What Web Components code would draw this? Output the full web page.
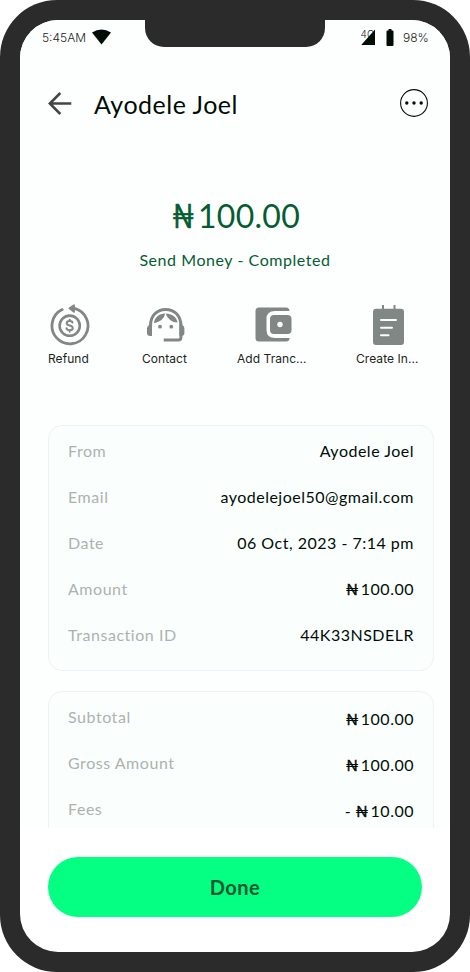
<!DOCTYPE html>
<html lang="en">
<head>
<meta charset="utf-8">
<title>Transaction</title>
<style>
body{margin:0;background:#fff;font-family:Lato,"Liberation Sans",sans-serif;color:#000d06}
</style>
</head>
<body>
<phone-frame>
  <status-bar slot="status"></status-bar>
  <title-bar slot="title">Ayodele Joel</title-bar>
  <amount-summary><naira-amount big>100.00</naira-amount><span slot="note">Send Money - Completed</span></amount-summary>
  <action-row>
    <action-item icon="refund" style="width:41px;margin-left:28px">Refund</action-item>
    <action-item icon="contact" style="width:46px;margin-left:53px">Contact</action-item>
    <action-item icon="wallet" style="width:70px;margin-left:49px">Add Tranc...</action-item>
    <action-item icon="note" style="width:63px;margin-left:49px">Create In...</action-item>
  </action-row>
  <detail-card>
    <detail-row label="From">Ayodele Joel</detail-row>
    <detail-row label="Email">ayodelejoel50@gmail.com</detail-row>
    <detail-row label="Date">06 Oct, 2023 - 7:14 pm</detail-row>
    <detail-row label="Amount"><naira-amount>100.00</naira-amount></detail-row>
    <detail-row label="Transaction ID">44K33NSDELR</detail-row>
  </detail-card>
  <detail-card class="second">
    <detail-row label="Subtotal" low><naira-amount>100.00</naira-amount></detail-row>
    <detail-row label="Gross Amount" low><naira-amount>100.00</naira-amount></detail-row>
    <detail-row label="Fees" low><naira-amount prefix="-">10.00</naira-amount></detail-row>
  </detail-card>
  <done-button slot="footer">Done</done-button>
</phone-frame>
<script>
const define = (name, render) => customElements.define(name, class extends HTMLElement {
  constructor() { super(); this.attachShadow({mode: 'open'}); }
  connectedCallback() {
    const t = document.createElement('template');
    t.innerHTML = render(this);
    this.shadowRoot.replaceChildren(t.content.cloneNode(true));
  }
});

define('phone-frame', () => `<style>
:host{display:block;box-sizing:border-box;width:470px;height:972px;padding:20px;background:#2b2b2b;border-radius:57px}
.screen{position:relative;display:flex;flex-direction:column;height:932px;border-radius:38px;background:#fff;overflow:hidden}
.scroll{height:808px;overflow:hidden;background:#fdfffe;display:flex;flex-direction:column;flex:none}
.notch{position:absolute;left:125px;top:0;width:180px;height:27px;background:#2b2b2b;border-radius:0 0 19px 19px}
footer{flex:1;padding:29px 28px 35px}
</style><div class="screen"><div class="scroll"><slot name="status"></slot><slot name="title"></slot><slot></slot></div><footer><slot name="footer"></slot></footer><div class="notch"></div></div>`);

define('status-bar', () => `<style>
:host{display:flex;height:36px;padding:0 23px 2px 22px;align-items:center;font:300 12px/14px Inter,sans-serif;color:#1c2420;flex:none;box-sizing:border-box}
.time{width:44px;margin-right:5.500px;white-space:nowrap;padding-top:1px}
.spacer{flex:1}
svg{display:block;flex:none}
.pct{width:24px;white-space:nowrap;padding-top:1px}
</style><span class="time">5:45AM</span>
<svg width="19" height="16" viewBox="0 0 19 16"><path d="M0 3.600Q9.500-2.500 19 3.600L9.500 15.500Z" fill="#000d06"/></svg>
<span class="spacer"></span>
<svg width="15" height="18" viewBox="0 0 15 18"><text x="-.4" y="9.500" font-family="Inter" font-size="10" font-weight="300" fill="#1c2420">4G</text><path d="M14 1.500V17H.2Z" fill="#000d06"/></svg>
<svg width="8" height="17" viewBox="0 0 8 17" style="margin:0 9px 0 10px"><path d="M2.500 0h3v1.500H6.500Q7.500 1.500 7.500 2.500V16Q7.500 17 6.500 17h-5Q.5 17 .5 16V2.500Q.5 1.500 1.500 1.500h1Z" fill="#000d06"/></svg>
<span class="pct">98%</span>`);

define('title-bar', () => `<style>
:host{display:flex;align-items:center;height:64px;margin-top:15px;padding:0 22px 0 28px;flex:none;font-size:25px;line-height:32px;box-sizing:border-box;letter-spacing:.5px}
.t{flex:1;margin-left:22px;padding-top:1px}
svg{display:block}
</style><svg width="24" height="24" viewBox="0 0 24 24" fill="none" stroke="#414644" stroke-width="2.500"><path d="M23.300 12.500H2M12.300 2 1.800 12.500 12.300 23"/></svg>
<div class="t"><slot></slot></div>
<svg width="28" height="28" viewBox="0 0 28 28"><circle cx="14" cy="14" r="13.400" fill="none" stroke="#000d06" stroke-width="1.100"/><g fill="#000d06"><circle cx="6.800" cy="14" r="1.700"/><circle cx="14" cy="14" r="1.700"/><circle cx="21.200" cy="14" r="1.700"/></g></svg>`);

define('naira-amount', el => `<style>
:host{display:inline-flex;align-items:baseline;font-size:16px;letter-spacing:.5px;font-weight:400}
:host([big]){font-size:32px;letter-spacing:.3px}
.p{margin-right:4.500px}
.n{width:13px;margin-right:2px;letter-spacing:0;-webkit-text-stroke:.35px currentColor}
.n span{display:inline-block}
:host([big]) .n{width:22px;margin-right:4px;-webkit-text-stroke:.5px currentColor}
:host([big]) .n span{transform:scaleX(.88);transform-origin:0 50%}
</style>${el.hasAttribute('prefix') ? `<span class="p">${el.getAttribute('prefix')}</span>` : ''}<span class="n"><span>₦</span></span><slot></slot>`);

define('amount-summary', () => `<style>
:host{display:flex;flex-direction:column;align-items:center;color:#065c31;margin-top:61px;height:108px;flex:none}
.a{height:40px;line-height:40px;padding-left:2px}
.note{font-size:16px;line-height:20px;letter-spacing:.56px;margin-top:14px}
</style><div class="a"><slot></slot></div><div class="note"><slot name="note"></slot></div>`);

define('action-row', () => `<style>:host{display:flex;height:121px;flex:none}</style><slot></slot>`);

const icons = {
  refund: `<svg width="40" height="43" viewBox="0 0 40 43" fill="none" stroke="#808784" stroke-width="2.800" stroke-linecap="round"><path d="M12.200 5.600A18 18 0 1 0 24.500 4.400"/><circle cx="19.700" cy="21.700" r="10.100" stroke-width="2.600"/><path d="M19.500 4.300 24 1.200V7.900Z" fill="#808784" stroke-width="1.800" stroke-linejoin="round"/><path d="M22.500 18.600c-.3-1.200-1.500-1.600-2.900-1.600-1.700 0-2.900.7-2.900 2.200 0 3.200 6 1.500 6 4.700 0 1.500-1.300 2.300-3 2.300-1.700 0-2.900-.6-3.200-2M19.700 15.700v1M19.700 26.500v1.200" stroke-width="2"/></svg>`,
  contact: `<svg width="38" height="34" viewBox="0 0 38 34"><path d="M3.500 18.500V17.500C3.500 7.500 10 1.500 18.700 1.500S33.900 7.500 33.900 17.500V29.500q0 2.400-2.500 2.400H16.700" fill="none" stroke="#808784" stroke-width="3"/><path d="M5 16.500V28H3.300Q0 28 0 25V20.500Q0 18 2 17.300V16.500ZM32.400 16.500V28H34Q37.400 28 37.400 25V20.500Q37.400 18 35.400 17.300V16.500Z" fill="#808784"/><path d="M6.800 15.200C7.500 9.500 12 5.400 18.200 5.400Q17 12.800 6.800 15.200Z" fill="#808784"/><path d="M18.600 5.400C25 5.400 29.600 9 30.500 14.400Q22 14.400 18.600 5.400Z" fill="#808784"/><circle cx="13" cy="18.700" r="1.900" fill="#808784"/><circle cx="24.300" cy="18.700" r="1.900" fill="#808784"/></svg>`,
  wallet: `<svg width="37" height="35" viewBox="0 0 37 35"><path d="M4 .5H31Q34.500.5 34.500 4H20Q11.500 4 11.500 12V23Q11.500 31 20 31H34.500Q34.500 34.500 31 34.500H4Q.5 34.500.5 31V4Q.5.5 4 .5Z" fill="#808784"/><path fill-rule="evenodd" d="M19 8H32.500Q36.500 8 36.500 12V23Q36.500 27 32.500 27H19Q15 27 15 23V12Q15 8 19 8ZM25 14.700a2.800 2.800 0 1 0 .01 0Z" fill="#808784"/></svg>`,
  note: `<svg width="31" height="40" viewBox="0 0 31 40"><path d="M10 0v5M21.500 0v5" stroke="#808784" stroke-width="2"/><rect y="3.700" width="31" height="36.300" rx="3" fill="#808784"/><path d="M8 15h15M8 22.700h11M8 30.300h7.500" stroke="#fdfffe" stroke-width="2" stroke-linecap="round"/></svg>`
};
const place = {refund:'0 0 0 2px', contact:'3.700px 0 0 5px', wallet:'3px 0 0 17.500px', note:'1px 0 0 17px'};
define('action-item', el => {
  const k = el.getAttribute('icon');
  return `<style>
:host{display:block;font:400 12px/16px Inter,sans-serif;white-space:nowrap;color:#1c2420;flex:none;letter-spacing:.05px}
.i{height:47px;box-sizing:border-box;padding:${place[k]}}svg{display:block}
</style><div class="i">${icons[k]}</div><slot></slot>`;
});

define('detail-card', () => `<style>
:host{display:block;box-sizing:border-box;width:386px;height:246px;margin:0 0 20px 28px;padding:2px 19px 0 19px;border:1px solid #edf1ef;border-radius:14px;background:#fafffd;flex:none}
</style><slot></slot>`);

define('detail-row', el => `<style>
:host{display:flex;justify-content:space-between;align-items:center;height:46px;font-size:16px;line-height:20px;letter-spacing:.5px}
.l{color:#adb2b0;letter-spacing:.54px}
.v{white-space:nowrap}
:host([low]) .v{padding-top:4px}
</style><span class="l">${el.getAttribute('label')}</span><span class="v"><slot></slot></span>`);

define('done-button', () => `<style>
:host{display:block}
button{display:block;width:374px;height:60px;border:0;border-radius:30px;background:#05ff83;color:#06582f;font:700 20px/24px Lato,sans-serif;letter-spacing:.5px;padding:0}
</style><button><slot></slot></button>`);
</script>
</body>
</html>
